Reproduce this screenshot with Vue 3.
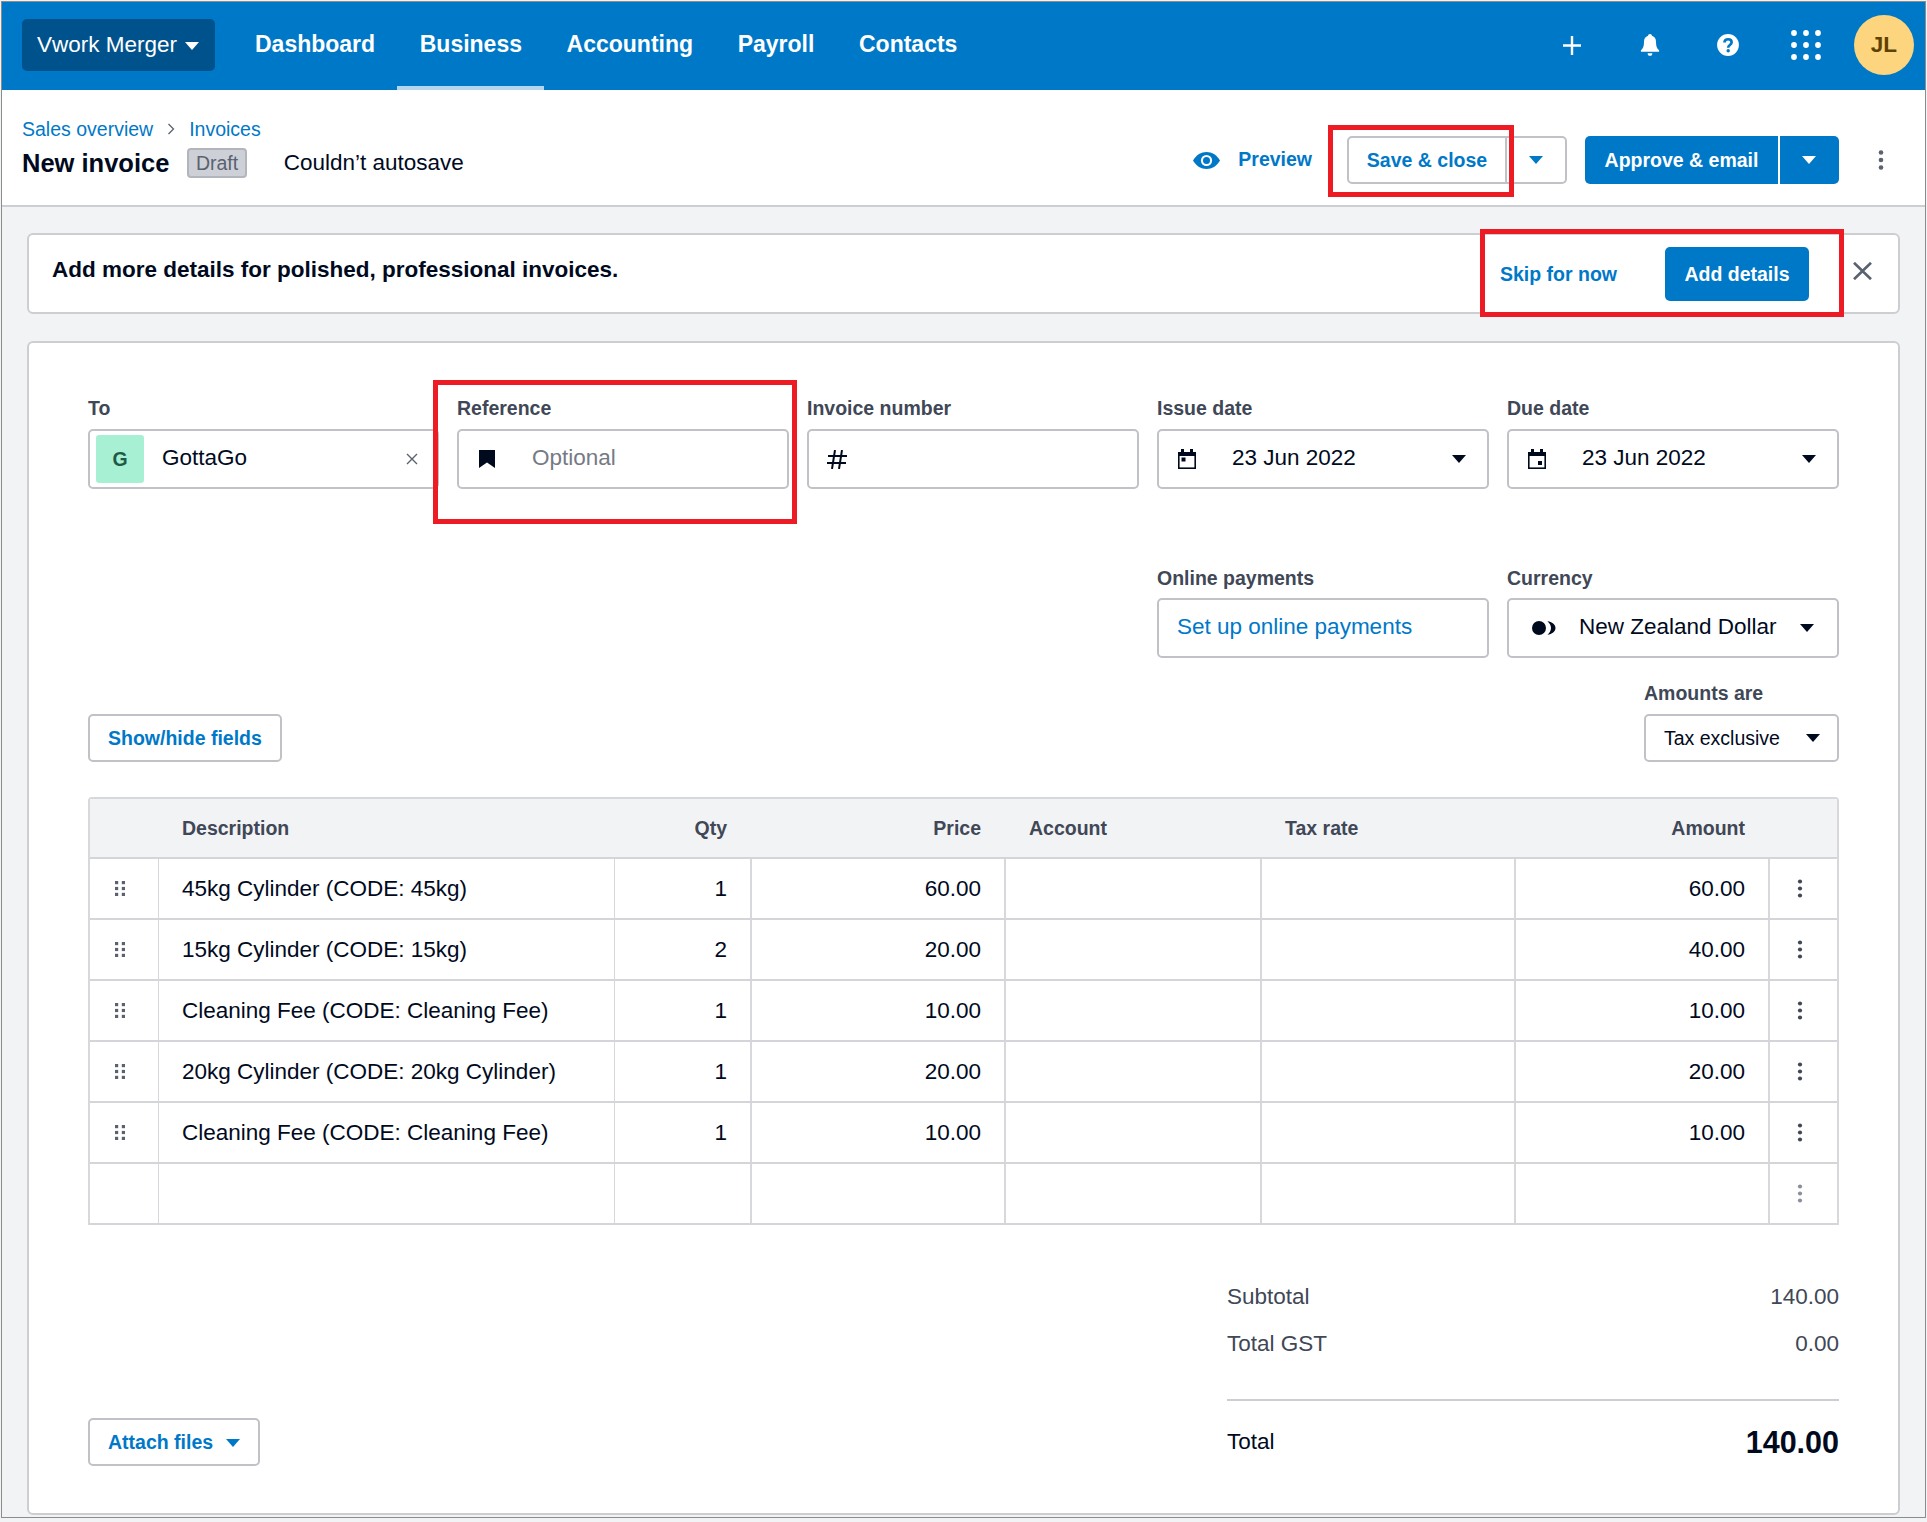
<script setup>
const nav = ['Dashboard', 'Business', 'Accounting', 'Payroll', 'Contacts']
const lines = [
  { d: '45kg Cylinder (CODE: 45kg)', q: '1', p: '60.00', a: '60.00' },
  { d: '15kg Cylinder (CODE: 15kg)', q: '2', p: '20.00', a: '40.00' },
  { d: 'Cleaning Fee (CODE: Cleaning Fee)', q: '1', p: '10.00', a: '10.00' },
  { d: '20kg Cylinder (CODE: 20kg Cylinder)', q: '1', p: '20.00', a: '20.00' },
  { d: 'Cleaning Fee (CODE: Cleaning Fee)', q: '1', p: '10.00', a: '10.00' },
]
</script>

<template>
  <div class="frame">
    <header class="topbar">
      <button class="org">Vwork Merger<span class="caret org-caret"></span></button>
      <nav class="nav">
        <a v-for="n in nav" :key="n" class="nav-item" :class="{ active: n === 'Business' }">{{ n }}</a>
      </nav>
      <div class="top-icons">
        <span class="top-icon">
          <svg width="18" height="19" viewBox="0 0 18 19"><path d="M9 0v19M0 9.500h18" stroke="#fff" stroke-width="2.400" fill="none"/></svg>
        </span>
        <span class="top-icon">
          <svg width="20" height="22" viewBox="0 0 20 23"><path d="M10 0c1.200 0 2 .8 2 1.900 3 .9 4.300 3.300 4.300 6.600 0 3.800.8 6.300 3.200 8.500v1.500H.5V17c2.400-2.200 3.200-4.700 3.200-8.500 0-3.300 1.300-5.700 4.300-6.600C8 .8 8.800 0 10 0z" fill="#fff"/><path d="M7.500 20h5c0 1.600-1 2.800-2.500 2.800S7.500 21.600 7.500 20z" fill="#fff"/></svg>
        </span>
        <span class="top-icon">
          <svg width="22" height="22" viewBox="0 0 23 23"><circle cx="11.500" cy="11.500" r="11.400" fill="#fff"/><path d="M7.800 9c0-2.200 1.600-3.500 3.800-3.500s3.700 1.300 3.700 3.200c0 2.900-3.600 2.800-3.600 5.600" stroke="#0078c8" stroke-width="2.800" fill="none"/><circle cx="11.700" cy="17.600" r="1.800" fill="#0078c8"/></svg>
        </span>
        <span class="top-icon">
          <svg width="30" height="30" viewBox="0 0 30 30" fill="#fff">
            <circle cx="3" cy="3" r="2.900"/><circle cx="15" cy="3" r="2.900"/><circle cx="27" cy="3" r="2.900"/>
            <circle cx="3" cy="15" r="2.900"/><circle cx="15" cy="15" r="2.900"/><circle cx="27" cy="15" r="2.900"/>
            <circle cx="3" cy="27" r="2.900"/><circle cx="15" cy="27" r="2.900"/><circle cx="27" cy="27" r="2.900"/>
          </svg>
        </span>
        <span class="avatar">JL</span>
      </div>
    </header>

    <section class="subhead">
      <div class="subhead-left">
        <div class="crumbs">
          <a>Sales overview</a>
          <svg class="crumb-sep" width="8" height="12" viewBox="0 0 8 12"><path d="M1.500 1l5 5-5 5" stroke="#5a6270" stroke-width="1.300" fill="none"/></svg>
          <a>Invoices</a>
        </div>
        <div class="title-row">
          <h1 class="title">New invoice</h1>
          <span class="draft">Draft</span>
          <span class="autosave">Couldn’t autosave</span>
        </div>
      </div>
      <div class="actions">
        <svg class="eye" width="27" height="17" viewBox="0 0 27 17"><path d="M0 8.500C3.500 2.800 8 0 13.500 0S23.500 2.800 27 8.500C23.500 14.200 19 17 13.500 17S3.500 14.200 0 8.500z" fill="#0078c8"/><circle cx="13.500" cy="8.500" r="5.600" fill="#fff"/><circle cx="13.500" cy="8.500" r="3.500" fill="#0078c8"/></svg>
        <a class="preview">Preview</a>
        <div class="split outline">
          <button class="split-main">Save &amp; close</button>
          <button class="split-side"><span class="caret"></span></button>
        </div>
        <div class="split solid">
          <button class="split-main">Approve &amp; email</button>
          <button class="split-side"><span class="caret"></span></button>
        </div>
        <svg class="more-head" width="6" height="20" viewBox="0 0 6 20" fill="#5a6270"><circle cx="3" cy="2.500" r="2.300"/><circle cx="3" cy="10" r="2.300"/><circle cx="3" cy="17.500" r="2.300"/></svg>
      </div>
    </section>

    <main class="page">
      <section class="banner">
        <p class="banner-text">Add more details for polished, professional invoices.</p>
        <div class="banner-actions">
          <a class="skip">Skip for now</a>
          <button class="add">Add details</button>
          <svg class="banner-x" width="19" height="18" viewBox="0 0 19 18"><path d="M1 .8l17 16.400M18 .8L1 17.200" stroke="#5a6270" stroke-width="2.700" fill="none"/></svg>
        </div>
      </section>

      <section class="card">
        <div class="fields row-one">
          <div class="field">
            <label>To</label>
            <div class="input to-input">
              <span class="chip">G</span>
              <span class="value to-name">GottaGo</span>
              <svg class="to-x" width="12" height="12" viewBox="0 0 12 12"><path d="M1 1l10 10M11 1L1 11" stroke="#5a6270" stroke-width="1.400" fill="none"/></svg>
            </div>
          </div>
          <div class="field">
            <label>Reference</label>
            <div class="input">
              <svg class="ref-icon" width="16" height="18" viewBox="0 0 16 18"><path d="M0 0h16v18l-8-5.500L0 18z" fill="#000a1e"/></svg>
              <span class="placeholder">Optional</span>
            </div>
          </div>
          <div class="field">
            <label>Invoice number</label>
            <div class="input">
              <svg class="hash" width="20" height="19" viewBox="0 0 20 19"><path d="M8 0L5 19M15 0l-3 19M1 6h19M0 13h19" stroke="#000a1e" stroke-width="2" fill="none"/></svg>
            </div>
          </div>
          <div class="field">
            <label>Issue date</label>
            <div class="input date">
              <svg class="cal" width="20" height="20" viewBox="0 0 20 20"><path d="M4 0h3v3h6V0h3v3h3v17H1V3h3z" fill="#000a1e"/><rect x="2.600" y="7" width="14.800" height="11.400" fill="#fff"/><rect x="4.500" y="8.500" width="4" height="4" fill="#000a1e"/></svg>
              <span class="value">23 Jun 2022</span>
              <span class="caret dark push"></span>
            </div>
          </div>
          <div class="field">
            <label>Due date</label>
            <div class="input date">
              <svg class="cal" width="20" height="20" viewBox="0 0 20 20"><path d="M4 0h3v3h6V0h3v3h3v17H1V3h3z" fill="#000a1e"/><rect x="2.600" y="7" width="14.800" height="11.400" fill="#fff"/><rect x="11" y="12" width="4" height="4" fill="#000a1e"/></svg>
              <span class="value">23 Jun 2022</span>
              <span class="caret dark push"></span>
            </div>
          </div>
        </div>

        <div class="fields row-two">
          <div class="field col-four">
            <label>Online payments</label>
            <div class="input"><a class="online">Set up online payments</a></div>
          </div>
          <div class="field col-five">
            <label>Currency</label>
            <div class="input currency">
              <svg width="24" height="14" viewBox="0 0 24 14"><circle cx="7" cy="7" r="7" fill="#000a1e"/><path d="M15.500 .2C20 .8 23.500 3.400 23.500 7S20 13.200 15.500 13.800C17.800 11.600 19 9.500 19 7S17.800 2.400 15.500 .2z" fill="#000a1e"/></svg>
              <span class="value">New Zealand Dollar</span>
              <span class="caret dark push"></span>
            </div>
          </div>
        </div>

        <div class="row-three">
          <button class="btn">Show/hide fields</button>
          <div class="field amounts">
            <label>Amounts are</label>
            <div class="input small">
              <span class="value-small">Tax exclusive</span>
              <span class="caret dark push"></span>
            </div>
          </div>
        </div>

        <div class="table">
          <div class="t-row t-head">
            <div></div>
            <div class="th">Description</div>
            <div class="th right qty-head">Qty</div>
            <div class="th right">Price</div>
            <div class="th">Account</div>
            <div class="th">Tax rate</div>
            <div class="th right">Amount</div>
            <div></div>
          </div>
          <div v-for="(l, i) in lines" :key="i" class="t-row">
            <div class="td center thin grip">
              <svg width="10" height="15" viewBox="0 0 10 15" fill="#5a6270"><rect width="3.200" height="3.200"/><rect x="6.800" width="3.200" height="3.200"/><rect y="5.900" width="3.200" height="3.200"/><rect x="6.800" y="5.900" width="3.200" height="3.200"/><rect y="11.800" width="3.200" height="3.200"/><rect x="6.800" y="11.800" width="3.200" height="3.200"/></svg>
            </div>
            <div class="td thin">{{ l.d }}</div>
            <div class="td right">{{ l.q }}</div>
            <div class="td right">{{ l.p }}</div>
            <div class="td"></div>
            <div class="td"></div>
            <div class="td right">{{ l.a }}</div>
            <div class="td center last">
              <svg width="6" height="19" viewBox="0 0 6 19" fill="#404756"><circle cx="3" cy="2.500" r="2.100"/><circle cx="3" cy="9.500" r="2.100"/><circle cx="3" cy="16.500" r="2.100"/></svg>
            </div>
          </div>
          <div class="t-row">
            <div class="td thin"></div>
            <div class="td thin"></div>
            <div class="td"></div>
            <div class="td"></div>
            <div class="td"></div>
            <div class="td"></div>
            <div class="td"></div>
            <div class="td center last">
              <svg width="6" height="19" viewBox="0 0 6 19" fill="#8a8f9a"><circle cx="3" cy="2.500" r="2.100"/><circle cx="3" cy="9.500" r="2.100"/><circle cx="3" cy="16.500" r="2.100"/></svg>
            </div>
          </div>
        </div>

        <div class="foot">
          <button class="btn attach">Attach files<span class="caret"></span></button>
          <div class="totals">
            <div class="sum"><span>Subtotal</span><span>140.00</span></div>
            <div class="sum"><span>Total GST</span><span>0.00</span></div>
            <div class="grand"><span>Total</span><strong>140.00</strong></div>
          </div>
        </div>
      </section>
    </main>

    <div class="mark mark-save"></div>
    <div class="mark mark-skip"></div>
    <div class="mark mark-ref"></div>
  </div>
</template>

<style>
html, body { margin: 0; background: #f2f3f5; }
</style>

<style scoped>
* { box-sizing: border-box; }
.frame {
  position: relative;
  width: 1925px;
  height: 1517px;
  margin: 1px 0 0 1px;
  border: 1px solid #8c8c8c;
  background: #f2f3f5;
  overflow: hidden;
  font-family: "Liberation Sans", Arial, sans-serif;
  color: #000a1e;
  font-size: 22.5px;
}
button { font-family: inherit; cursor: pointer; }
a { cursor: pointer; }

.caret {
  display: inline-block;
  width: 0; height: 0;
  border-left: 7.500px solid transparent;
  border-right: 7.500px solid transparent;
  border-top: 8px solid #0078c8;
}
.caret.dark { border-top-color: #000a1e; }
.push { margin-left: auto; }

.topbar {
  height: 88px;
  background: #0078c8;
  display: flex;
  align-items: center;
  padding-left: 20px;
}
.org {
  width: 193px; height: 52px;
  margin-top: -2px;
  background: #00528c;
  color: #fff;
  border: 0; border-radius: 5px;
  font-size: 22.500px;
  display: flex; align-items: center;
  padding: 0 0 0 15px;
}
.org-caret { border-top-color: #fff; margin-left: 8px; margin-top: 2px; }
.nav { display: flex; align-self: stretch; margin-left: 17.700px; }
.nav-item {
  display: flex; align-items: center;
  padding: 0 22.300px 4px;
  color: #fff;
  font-weight: 700;
  font-size: 23px;
  border-bottom: 4px solid transparent;
  border-top: 4px solid transparent;
}
.nav-item.active { border-bottom-color: #b3d6ee; }
.top-icons { margin-left: auto; margin-top: -2px; display: flex; align-items: center; padding-right: 11px; }
.top-icon { width: 78px; height: 60px; display: flex; align-items: center; justify-content: center; }
.avatar {
  width: 60px; height: 60px; margin-left: 9px;
  border-radius: 50%;
  background: #fcd57e;
  color: #5e4300;
  display: flex; align-items: center; justify-content: center;
  font-size: 22.500px; font-weight: 700;
}

.subhead {
  height: 117px;
  background: #fff;
  border-bottom: 2px solid #ccced2;
  display: flex;
  justify-content: space-between;
  padding-left: 20px;
}
.subhead-left { padding-top: 27px; }
.crumbs { display: flex; align-items: center; height: 24px; font-size: 19.500px; color: #0078c8; }
.crumb-sep { margin: 0 14px; }
.title-row { display: flex; align-items: center; height: 30px; margin-top: 7px; }
.title { margin: 0; font-size: 25.500px; font-weight: 700; line-height: 30px; }
.draft {
  margin-left: 18px;
  height: 30px;
  padding: 0 6.500px;
  display: flex; align-items: center;
  font-size: 19.500px;
  color: #5a6270;
  background: #cdd0d6;
  border: 2px solid #b2b5bb;
  border-radius: 4px;
}
.autosave { margin-left: 37px; font-size: 22.500px; margin-top: -1px; }
.actions { display: flex; align-items: center; height: 48px; margin-top: 46px; padding-right: 41px; }
.preview { margin-left: 18px; margin-right: 35px; margin-bottom: 1px; font-size: 19.500px; font-weight: 700; color: #0078c8; }
.split { display: flex; height: 48px; }
.split button { height: 48px; font-size: 19.500px; font-weight: 700; padding: 0; display: flex; align-items: center; justify-content: center; }
.outline button { background: #fff; color: #0078c8; border: 2px solid #c0c2c8; }
.outline .split-main { width: 160px; border-radius: 5px 0 0 5px; }
.outline .split-side { width: 60px; border-left: 0; border-radius: 0 5px 5px 0; }
.solid { margin-left: 18px; }
.solid button { background: #0078c8; color: #fff; border: 0; }
.solid .split-main { width: 195px; border-radius: 5px 0 0 5px; border-right: 2px solid #fff; }
.solid .split-side { width: 58.500px; border-radius: 0 5px 5px 0; }
.solid .caret { border-top-color: #fff; }
.more-head { margin-left: 39.500px; }

.page { padding: 26px 25px 0; }
.banner {
  height: 81px;
  background: #fff;
  border: 2px solid #ccced2;
  border-radius: 6px;
  display: flex;
  justify-content: space-between;
  padding: 0 26px 0 23px;
}
.banner-text { margin: 20px 0 0; font-size: 22.500px; line-height: 30px; font-weight: 700; }
.banner-actions { display: flex; align-items: flex-start; padding-top: 12px; }
.skip { margin-top: 15px; font-size: 19.500px; line-height: 24px; font-weight: 700; color: #0078c8; }
.add {
  margin-left: 48px;
  width: 144px; height: 54px;
  background: #0078c8; color: #fff;
  border: 0; border-radius: 5px;
  font-size: 19.500px; font-weight: 700;
}
.banner-x { margin-left: 44px; margin-top: 15px; }

.card {
  margin-top: 27px;
  height: 1174px;
  background: #fff;
  border: 2px solid #ccced2;
  border-radius: 6px;
  padding: 54px 59px 47px;
  display: flex;
  flex-direction: column;
}
.fields {
  display: grid;
  grid-template-columns: 351px 332px 332px 332px 332px;
  column-gap: 18px;
}
.row-two { margin-top: 77px; }
.row-two label { line-height: 24px; }
.col-four { grid-column: 4; }
.col-five { grid-column: 5; }
label { display: block; height: 24px; line-height: 22px; margin-bottom: 8px; font-size: 19.500px; font-weight: 700; color: #404756; }
.input {
  height: 60px;
  border: 2px solid #c0c2c8;
  border-radius: 5px;
  background: #fff;
  display: flex;
  align-items: center;
  padding: 0 18px;
}
.input .value, .placeholder, .online { margin-bottom: 2px; }
.to-input { padding: 0 19px 0 6px; }
.chip {
  width: 48px; height: 48px;
  border-radius: 3px;
  background: #a8f0d4;
  color: #1f5a47;
  font-size: 19.500px; font-weight: 700;
  display: flex; align-items: center; justify-content: center;
}
.to-name { margin-left: 18px; }
.to-x { margin-left: auto; }
.ref-icon { margin-left: 2px; }
.placeholder { margin-left: 37px; color: #757a85; }
.date { padding-right: 21px; }
.date .cal { margin-right: 35px; }
.online { color: #0078c8; }
.currency { padding: 0 23px 0 23px; }
.currency svg { margin-right: 23px; }
.row-three { margin-top: 24px; display: flex; justify-content: space-between; align-items: flex-end; }
.btn {
  height: 48px;
  padding: 0 18px;
  background: #fff;
  border: 2px solid #c0c2c8;
  border-radius: 5px;
  color: #0078c8;
  font-size: 19.500px;
  font-weight: 700;
  display: flex; align-items: center;
}
.amounts { width: 195px; }
.small { height: 48px; padding: 0 17px 0 18px; }
.value-small { font-size: 19.500px; color: #000a1e; }

.table {
  margin-top: 35px;
  border: 2px solid #d6d8dc;
  border-bottom: 0;
  border-radius: 4px 4px 0 0;
}
.t-row {
  display: grid;
  grid-template-columns: 69px 456px 137px 254px 256px 254px 254px 1fr;
  height: 61px;
  border-bottom: 2px solid #d3d5d9;
}
.t-head { height: 60px; background: #f2f3f5; }
.th {
  padding: 0 25px 0 23px;
  display: flex; align-items: center;
  font-size: 19.500px; font-weight: 700; color: #404756;
}
.qty-head { padding-right: 25px; }
.td {
  padding: 0 23px;
  border-right: 2px solid #d6d8dc;
  display: flex; align-items: center;
  font-size: 22.500px;
  white-space: nowrap;
}
.thin { border-right-width: 1px; }
.right { justify-content: flex-end; text-align: right; }
.center { justify-content: center; padding: 0 7px 0 0; }
.grip { padding-right: 9px; }
.last { border-right: 0; }

.foot { margin-top: auto; display: flex; justify-content: space-between; align-items: flex-end; }
.attach .caret { margin-left: 13px; margin-top: 2px; }
.totals { width: 612px; }
.sum { display: flex; justify-content: space-between; height: 30px; line-height: 30px; margin-bottom: 17px; color: #404756; }
.grand {
  margin-top: 40px;
  border-top: 2px solid #ccced2;
  padding: 22px 0 5px;
  display: flex; justify-content: space-between; align-items: center;
  height: 67px;
}
.grand strong { font-size: 30.500px; line-height: 38px; font-weight: 700; }

.mark { position: absolute; border: 5px solid #ed1c24; pointer-events: none; }
.mark-save { left: 1326px; top: 123px; width: 186px; height: 72px; }
.mark-skip { left: 1478px; top: 227px; width: 364px; height: 88px; }
.mark-ref { left: 431px; top: 378px; width: 364px; height: 144px; }
</style>
